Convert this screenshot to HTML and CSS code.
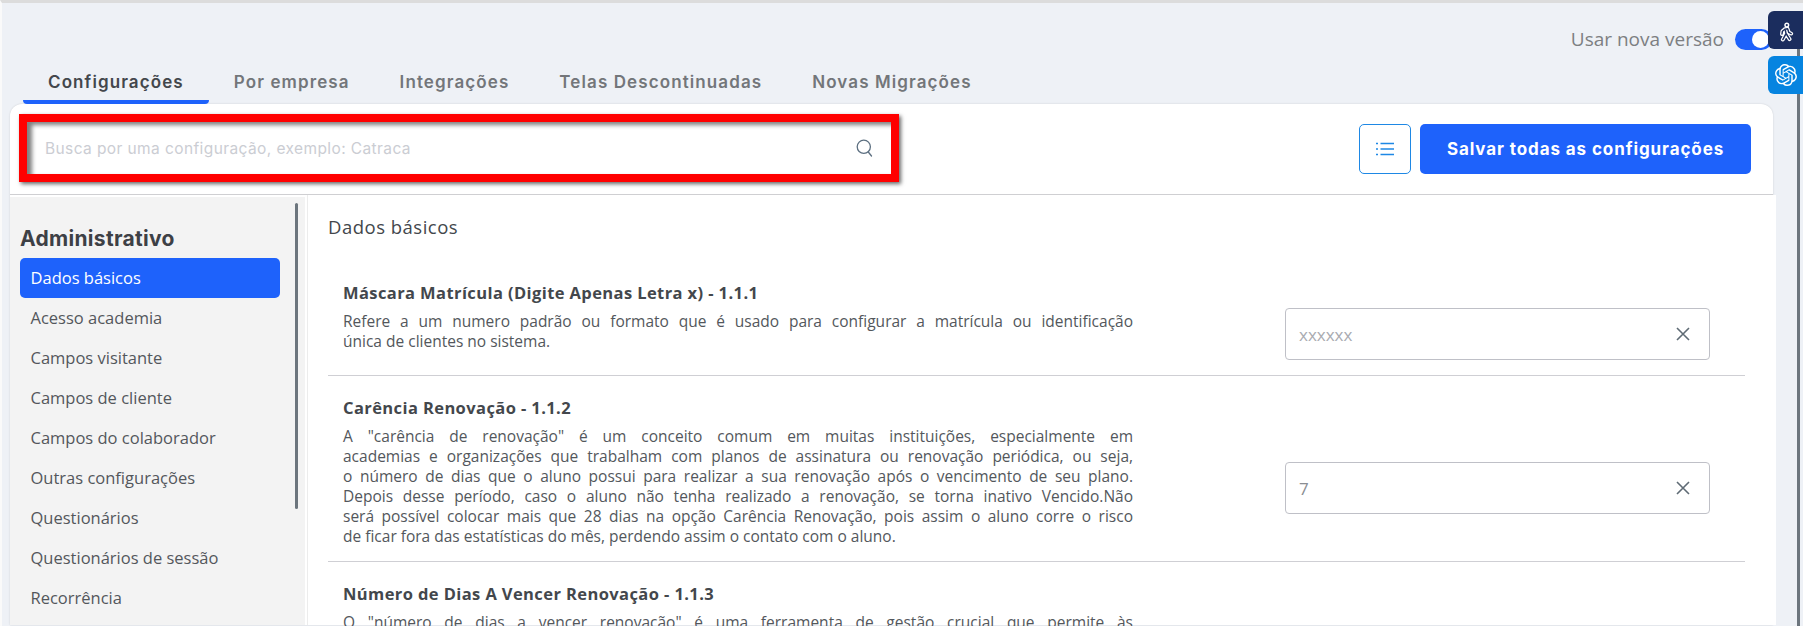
FILE: index.html
```html
<!DOCTYPE html>
<html lang="pt-BR">
<head>
<meta charset="utf-8">
<title>Configurações</title>
<link rel="stylesheet" href="styles.css">
</head>
<body>
<div class="side-tabs">
  <div class="side-tab side-tab-dark">
    <svg class="walker" width="16" height="20" viewBox="0 0 20 24" fill="none"><circle cx="11" cy="3.400" r="2.300" stroke="#fff" stroke-width="1.800"/><path d="M8.500 8.500l3.500-.5 1.500 4.500 3 1.500M8.500 8.500l-3 2.500-.5 3.500M9 8.500l1 5.500-4 7.500M10.500 14.500l4 6.500" stroke="#fff" stroke-width="4.800" stroke-linecap="round" stroke-linejoin="round"/><path d="M8.500 8.500l3.500-.5 1.500 4.500 3 1.500M8.500 8.500l-3 2.500-.5 3.500M9 8.500l1 5.500-4 7.500M10.500 14.500l4 6.500" stroke="#1b2d5e" stroke-width="1.800" stroke-linecap="round" stroke-linejoin="round"/></svg>
  </div>
  <div class="side-tab side-tab-blue">
    <svg width="22" height="22" viewBox="0 0 24 24" fill="#fff"><path d="M22.2819 9.8211a5.9847 5.9847 0 0 0-.5157-4.9108 6.0462 6.0462 0 0 0-6.5098-2.9A6.0651 6.0651 0 0 0 4.9807 4.1818a5.9847 5.9847 0 0 0-3.9977 2.9 6.0462 6.0462 0 0 0 .7427 7.0966 5.98 5.98 0 0 0 .511 4.9107 6.051 6.051 0 0 0 6.5146 2.9001A5.9847 5.9847 0 0 0 13.2599 24a6.0557 6.0557 0 0 0 5.7718-4.2058 5.9894 5.9894 0 0 0 3.9977-2.9001 6.0557 6.0557 0 0 0-.7475-7.0729zm-9.022 12.6081a4.4755 4.4755 0 0 1-2.8764-1.0408l.1419-.0804 4.7783-2.7582a.7948.7948 0 0 0 .3927-.6813v-6.7369l2.02 1.1686a.071.071 0 0 1 .038.052v5.5826a4.504 4.504 0 0 1-4.4945 4.4944zm-9.6607-4.1254a4.4708 4.4708 0 0 1-.5346-3.0137l.142.0852 4.783 2.7582a.7712.7712 0 0 0 .7806 0l5.8428-3.3685v2.3324a.0804.0804 0 0 1-.0332.0615L9.74 19.9502a4.4992 4.4992 0 0 1-6.1408-1.6464zM2.3408 7.8956a4.485 4.485 0 0 1 2.3655-1.9728V11.6a.7664.7664 0 0 0 .3879.6765l5.8144 3.3543-2.0201 1.1685a.0757.0757 0 0 1-.071 0l-4.8303-2.7865A4.504 4.504 0 0 1 2.3408 7.872zm16.5963 3.8558L13.1038 8.364 15.1192 7.2a.0757.0757 0 0 1 .071 0l4.8303 2.7913a4.4944 4.4944 0 0 1-.6765 8.1042v-5.6772a.79.79 0 0 0-.407-.667zm2.0107-3.0231l-.142-.0852-4.7735-2.7818a.7759.7759 0 0 0-.7854 0L9.409 9.2297V6.8974a.0662.0662 0 0 1 .0284-.0615l4.8303-2.7866a4.4992 4.4992 0 0 1 6.6802 4.66zM8.3065 12.863l-2.02-1.1638a.0804.0804 0 0 1-.038-.0567V6.0742a4.4992 4.4992 0 0 1 7.3757-3.4537l-.142.0805L8.704 5.459a.7948.7948 0 0 0-.3927.6813zm1.0976-2.3654l2.602-1.4998 2.6069 1.4998v2.9994l-2.5974 1.4997-2.6067-1.4997Z"/></svg>
  </div>
</div>
<div class="page-scrollbar"></div>

<div class="version-row">
  <span class="version-label">Usar nova versão</span>
  <span class="toggle"><span class="toggle-knob"></span></span>
</div>

<nav class="tabs">
  <a class="tab tab-active">Configurações</a>
  <a class="tab">Por empresa</a>
  <a class="tab">Integrações</a>
  <a class="tab">Telas Descontinuadas</a>
  <a class="tab">Novas Migrações</a>
</nav>

<main class="card">
  <header class="card-header">
    <div class="highlight">
      <div class="search">
        <span class="search-placeholder">Busca por uma configuração, exemplo: Catraca</span>
        <svg class="search-icon" width="17" height="18" viewBox="0 0 17 18" fill="none" stroke="#5c6f80" stroke-width="1.300"><circle cx="7.800" cy="7.800" r="6.600"/><path d="M12.300 13l3.200 4" stroke-linecap="round"/></svg>
      </div>
    </div>
    <div class="actions">
      <button class="btn-list">
        <svg width="18" height="14" viewBox="0 0 18 14" fill="none" stroke="#1e88e5" stroke-width="1.500"><path d="M4.500 1.500H18M4.500 7H18M4.500 12.500H18"/><path d="M0 1.500h2M0 7h2M0 12.500h2"/></svg>
      </button>
      <button class="btn-save">Salvar todas as configurações</button>
    </div>
  </header>

  <div class="card-body">
    <aside class="sidebar">
      <div class="sidebar-thumb"></div>
      <h2 class="sidebar-title">Administrativo</h2>
      <a class="side-item side-item-active">Dados básicos</a>
      <a class="side-item">Acesso academia</a>
      <a class="side-item">Campos visitante</a>
      <a class="side-item">Campos de cliente</a>
      <a class="side-item">Campos do colaborador</a>
      <a class="side-item">Outras configurações</a>
      <a class="side-item">Questionários</a>
      <a class="side-item">Questionários de sessão</a>
      <a class="side-item">Recorrência</a>
    </aside>

    <section class="content">
      <h1 class="content-title">Dados básicos</h1>

      <article class="setting">
        <div class="setting-text">
          <h3 class="setting-title">Máscara Matrícula (Digite Apenas Letra x) - 1.1.1</h3>
          <p class="setting-desc">
            <span class="line">Refere a um numero padrão ou formato que é usado para configurar a matrícula ou identificação</span>
            <span class="line line-end">única de clientes no sistema.</span>
          </p>
        </div>
        <div class="setting-field">
          <div class="field">
            <span class="field-placeholder">xxxxxx</span>
            <svg class="field-clear" width="14" height="14" viewBox="0 0 14 14" fill="none" stroke="#5f6b75" stroke-width="1.600"><path d="M1 1l12 12M13 1L1 13"/></svg>
          </div>
        </div>
      </article>

      <article class="setting">
        <div class="setting-text">
          <h3 class="setting-title">Carência Renovação - 1.1.2</h3>
          <p class="setting-desc">
            <span class="line">A "carência de renovação" é um conceito comum em muitas instituições, especialmente em</span>
            <span class="line">academias e organizações que trabalham com planos de assinatura ou renovação periódica, ou seja,</span>
            <span class="line">o número de dias que o aluno possui para realizar a sua renovação após o vencimento de seu plano.</span>
            <span class="line">Depois desse período, caso o aluno não tenha realizado a renovação, se torna inativo Vencido.Não</span>
            <span class="line">será possível colocar mais que 28 dias na opção Carência Renovação, pois assim o aluno corre o risco</span>
            <span class="line line-end">de ficar fora das estatísticas do mês, perdendo assim o contato com o aluno.</span>
          </p>
        </div>
        <div class="setting-field setting-field-low">
          <div class="field">
            <span class="field-value">7</span>
            <svg class="field-clear" width="14" height="14" viewBox="0 0 14 14" fill="none" stroke="#5f6b75" stroke-width="1.600"><path d="M1 1l12 12M13 1L1 13"/></svg>
          </div>
        </div>
      </article>

      <article class="setting setting-last">
        <div class="setting-text">
          <h3 class="setting-title">Número de Dias A Vencer Renovação - 1.1.3</h3>
          <p class="setting-desc">
            <span class="line">O "número de dias a vencer renovação" é uma ferramenta de gestão crucial que permite às</span>
          </p>
        </div>
      </article>
    </section>
  </div>
</main>
</body>
</html>
```
FILE: styles.css
```css
* { box-sizing: border-box; }
html, body { margin: 0; height: 626px; overflow: hidden; }
body {
  position: relative;
  background: #eef1f6;
  border-top: 3px solid #dcdcdc;
  border-left: 2px solid #fafafa;
  font-family: "Open Sans", "Noto Sans", sans-serif;
  color: #43474c;
}
h1, h2, h3, p { margin: 0; }

.version-row {
  display: flex;
  align-items: center;
  justify-content: flex-end;
  gap: 11px;
  height: 30px;
  margin-top: 21px;
  margin-right: 31px;
}
.version-label { font-size: 19px; color: #7d7f82; }
.toggle {
  display: block;
  width: 37px;
  height: 21px;
  border-radius: 11px;
  background: #1e62fb;
  position: relative;
}
.toggle-knob {
  position: absolute;
  right: 3px;
  top: 2px;
  width: 17px;
  height: 17px;
  border-radius: 50%;
  background: #fff;
}

.side-tabs {
  position: absolute;
  z-index: 3;
  right: 0;
  top: 8px;
  display: flex;
  flex-direction: column;
  gap: 7px;
}
.side-tab {
  width: 35px;
  height: 38px;
  display: flex;
  align-items: center;
  justify-content: center;
  border-radius: 6px 0 0 6px;
}
.side-tab-dark { background: #1b2d5e; }
.side-tab-blue { background: #0684e0; }
.walker { margin-top: 3px; }
.page-scrollbar {
  position: absolute;
  z-index: 2;
  right: 3px;
  top: 40px;
  bottom: 0;
  width: 3px;
  background: #6c757d;
}

.tabs {
  display: flex;
  margin: 6px 0 0 21px;
  height: 44px;
}
.tab {
  padding: 10px 25px 6px;
  height: 44px;
  border-bottom: 4px solid transparent;
  border-radius: 0 0 4px 4px;
  font-family: "Inter", sans-serif;
  font-size: 17px;
  line-height: 24px;
  font-weight: 600;
  letter-spacing: 1.1px;
  color: #73767a;
  white-space: nowrap;
}
.tab-active { color: #43474c; border-bottom-color: #1e62fb; }

.card {
  margin: 0 30px 0 8px;
  background: #fff;
  border-radius: 12px 12px 0 0;
  box-shadow: 0 0 2px rgba(0, 0, 0, 0.15);
}
.card-header {
  display: flex;
  justify-content: space-between;
  align-items: flex-start;
  height: 91px;
  padding: 10px 22px 0 9px;
  border-bottom: 1px solid #cfcfd2;
}
.highlight {
  width: 880px;
  height: 68px;
  border: 8px solid #ff0000;
  box-shadow: 2px 2px 4px rgba(0, 0, 0, 0.6), inset 5px 3px 4px rgba(0, 0, 0, 0.5);
}
.search {
  height: 100%;
  display: flex;
  align-items: center;
  justify-content: space-between;
  padding: 0 18px 0 18px;
}
.search-placeholder {
  font-family: "Inter", sans-serif;
  font-size: 15.5px;
  letter-spacing: 0.4px;
  color: #cbcdd3;
}
.actions { display: flex; gap: 9px; padding-top: 10px; }
.btn-list {
  width: 52px;
  height: 50px;
  display: flex;
  align-items: center;
  justify-content: center;
  padding: 0;
  background: #fff;
  border: 1px solid #1e88e5;
  border-radius: 5px;
}
.btn-save {
  width: 331px;
  height: 50px;
  background: #1e62fb;
  border: 0;
  border-radius: 5px;
  color: #fff;
  font-family: "Inter", sans-serif;
  font-size: 17px;
  font-weight: 700;
  letter-spacing: 0.9px;
}

.card-body {
  display: flex;
  margin-right: -3px;
  height: 430px;
  background: #fff;
}
.sidebar {
  position: relative;
  width: 295px;
  margin-top: 2px;
  flex: none;
  padding: 22px 25px 0 10px;
  background: #f3f3f3;
}
.sidebar-thumb {
  position: absolute;
  left: 285px;
  top: 6px;
  width: 3px;
  height: 306px;
  background: #6c757d;
  border-radius: 2px;
}
.sidebar-title {
  font-family: "Inter", sans-serif;
  font-size: 21px;
  line-height: 30px;
  font-weight: 700;
  color: #3d4045;
  margin: 5px 0 4px 0;
  letter-spacing: 0.3px;
}
.side-item {
  display: block;
  height: 40px;
  padding-left: 10.500px;
  border-radius: 5px;
  font-size: 16.500px;
  line-height: 40px;
  color: #53575c;
  white-space: nowrap;
}
.side-item-active { background: #1e62fb; color: #fff; }

.content {
  flex: 1;
  margin-left: 2px;
  padding: 0 31px 0 20px;
  border-left: 1px solid #ececec;
  min-width: 0;
}
.content-title {
  font-size: 18.500px;
  line-height: 26px;
  font-weight: 400;
  color: #43474c;
  padding-top: 19px;
  height: 66px;
  letter-spacing: 0.5px;
}
.setting {
  display: flex;
  align-items: flex-start;
  justify-content: space-between;
  padding: 20px 35px 15px 15px;
  border-bottom: 1px solid #cfcfd4;
}
.setting-last { border-bottom: 0; }
.setting-text { width: 790px; }
.setting-title {
  font-size: 16.500px;
  line-height: 24px;
  font-weight: 700;
  letter-spacing: 0.4px;
  color: #43474c;
  margin-bottom: 6px;
}
.setting-desc {
  font-size: 15.500px;
  line-height: 20px;
  color: #53575c;
}
.line {
  display: block;
  text-align: justify;
  text-align-last: justify;
}
.line-end { text-align: left; text-align-last: left; }
.setting-field { padding-top: 27px; }
.setting-field-low { padding-top: 66px; }
.field {
  width: 425px;
  height: 52px;
  display: flex;
  align-items: center;
  justify-content: space-between;
  padding: 0 19px 0 13px;
  border: 1px solid #bfc0c7;
  border-radius: 4px;
}
.field-placeholder { font-size: 17px; color: #a9abb1; }
.field-value { font-size: 17px; color: #8a8d92; }
```
